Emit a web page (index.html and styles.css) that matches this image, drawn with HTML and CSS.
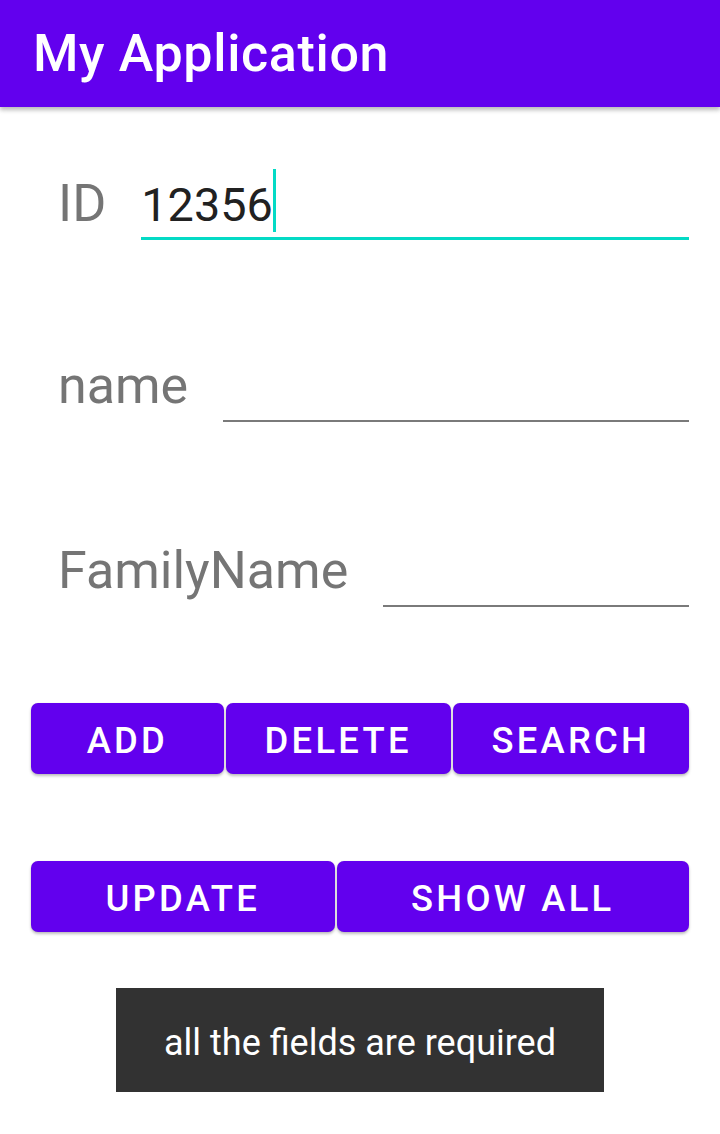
FILE: index.html
```html
<!DOCTYPE html>
<html lang="en">
<head>
<meta charset="utf-8">
<title>My Application</title>
<link rel="stylesheet" href="styles.css">
</head>
<body>
<header class="app-bar">
  <h1 class="app-title">My Application</h1>
</header>
<main class="content">
  <div class="field-row field-row-id">
    <span class="field-label">ID</span>
    <div class="field-input field-input-focused"><span class="field-value">12356</span></div>
  </div>
  <div class="field-row field-row-name">
    <span class="field-label">name</span>
    <div class="field-input"></div>
  </div>
  <div class="field-row field-row-family">
    <span class="field-label">FamilyName</span>
    <div class="field-input"></div>
  </div>
  <div class="button-row button-row-first">
    <button class="action-btn action-btn-min">Add</button>
    <button class="action-btn">Delete</button>
    <button class="action-btn">Search</button>
  </div>
  <div class="button-row button-row-second">
    <button class="action-btn">Update</button>
    <button class="action-btn">Show all</button>
  </div>
  <div class="toast-wrap">
    <div class="toast">all the fields are required</div>
  </div>
</main>
</body>
</html>
```

FILE: styles.css
```css
* {
  box-sizing: border-box;
}

html, body {
  margin: 0;
  padding: 0;
  background: #ffffff;
  font-family: Roboto, "Liberation Sans", sans-serif;
}

.app-bar {
  height: 107px;
  background: #6200ee;
  display: flex;
  align-items: center;
  padding-left: 33px;
  box-shadow: 0 3px 4px rgba(0, 0, 0, 0.22), 0 1px 8px rgba(0, 0, 0, 0.10);
  position: relative;
  z-index: 1;
}

.app-title {
  margin: 0;
  color: #ffffff;
  font-size: 52px;
  font-weight: 500;
  letter-spacing: 0.65px;
  line-height: normal;
}

.content {
  padding: 0 31px;
}

.field-row {
  display: flex;
  align-items: flex-end;
}

.field-row-id {
  margin-top: 65px;
}

.field-row-name {
  margin-top: 115px;
}

.field-row-family {
  margin-top: 118px;
}

.field-label {
  margin-left: 27px;
  margin-right: 35px;
  font-size: 52px;
  line-height: normal;
  color: #757575;
  padding-bottom: 6px;
}

.field-input {
  flex: 1;
  height: 67px;
  padding-bottom: 4px;
  border-bottom: 2px solid #7a7a7a;
  display: flex;
  align-items: flex-end;
  font-size: 46.8px;
  line-height: normal;
  color: #212121;
}

.field-input-focused {
  height: 68px;
  border-bottom: 3px solid #03dac5;
}

.field-value {
  padding-top: 9px;
  margin-bottom: 1px;
  border-right: 3px solid #03dac5;
}

.button-row {
  display: flex;
  gap: 2px;
}

.button-row-first {
  margin-top: 96px;
}

.button-row-second {
  margin-top: 87px;
}

.action-btn {
  flex: 1 1 auto;
  height: 71px;
  padding: 3px 32px 0;
  border: none;
  border-radius: 7px;
  background: #6200ee;
  color: #ffffff;
  font-family: Roboto, "Liberation Sans", sans-serif;
  font-size: 36.4px;
  font-weight: 500;
  letter-spacing: 3.25px;
  text-transform: uppercase;
  box-shadow: 0 2px 3px rgba(0, 0, 0, 0.26), 0 0 1px rgba(0, 0, 0, 0.12);
  white-space: nowrap;
}

.action-btn-min {
  flex: 1 1 179px;
}

.toast-wrap {
  display: flex;
  justify-content: center;
  margin-top: 56px;
}

.toast {
  height: 104px;
  padding: 5px 48px 0;
  display: flex;
  align-items: center;
  background: #323232;
  color: #ffffff;
  font-size: 36px;
}
```
